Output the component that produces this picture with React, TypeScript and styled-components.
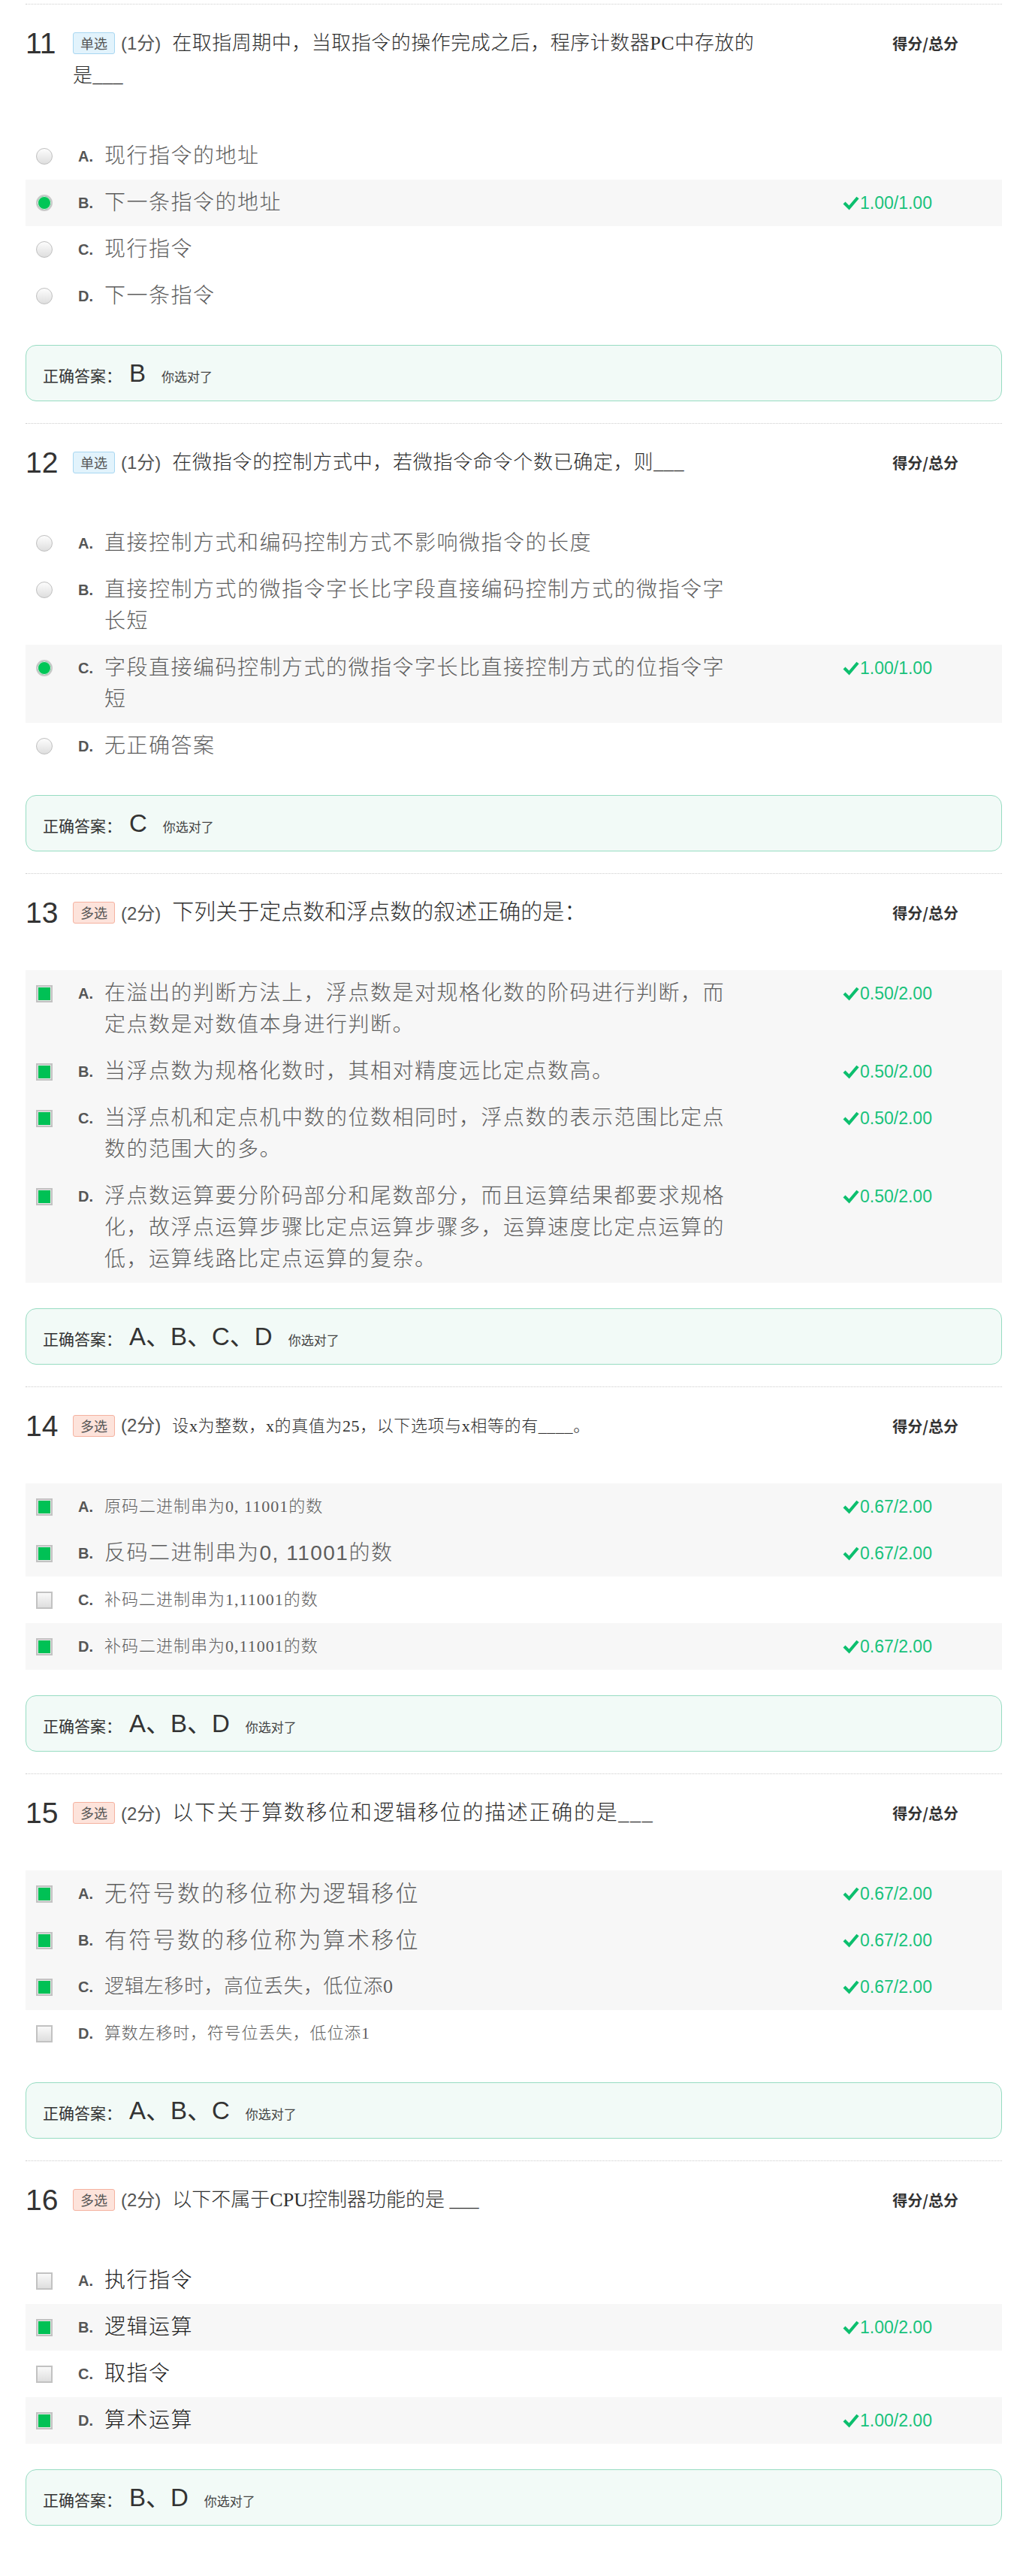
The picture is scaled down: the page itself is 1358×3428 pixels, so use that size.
import React from "react";
import styled, { createGlobalStyle, css } from "styled-components";

const GlobalStyle = createGlobalStyle`
  html, body { margin: 0; padding: 0; background: #fff; }
  body { font-family: "Liberation Sans", "Noto Sans CJK SC", sans-serif; color: #333; }
`;

const SANS = `"Liberation Sans", "Noto Sans CJK SC", sans-serif`;
const SERIF = `"Liberation Serif", "Noto Sans CJK SC", serif`;
const CJK = `"Noto Sans CJK SC", sans-serif`;

const Page = styled.main`
  width: 1300px;
  padding: 5px 0 70px 34px;
`;

const Question = styled.section`
  border-top: 1px dotted #cdcdcd;
  padding-top: 30px;
  padding-bottom: 29px;
`;

const Header = styled.header`
  display: flex;
  align-items: flex-start;
`;

const Num = styled.div`
  width: 63px;
  flex: none;
  font: 39px/43px ${SANS};
  color: #333;
`;

const Title = styled.div<{ $fs: number; $ls: number }>`
  width: 920px;
  font-family: ${SERIF};
  font-weight: 300;
  font-size: ${(p) => p.$fs}px;
  letter-spacing: ${(p) => p.$ls}px;
  line-height: 43px;
  color: #2e2e2e;
`;

const Lead = styled.span`
  letter-spacing: 0;
`;

const Badge = styled.span<{ $multi: boolean }>`
  display: inline-block;
  vertical-align: top;
  margin-top: 7px;
  width: 56px;
  height: 29px;
  box-sizing: border-box;
  border: 1px solid ${(p) => (p.$multi ? "#f5b2a0" : "#a8d7f1")};
  background: ${(p) => (p.$multi ? "#fde3db" : "#e2f3fc")};
  border-radius: 3px;
  font: 400 18px/27px ${CJK};
  color: #555;
  text-align: center;
`;

const Points = styled.span`
  font-family: ${SANS};
  font-weight: 400;
  font-size: 24px;
  line-height: 1;
  color: #555;
  margin: 0 15px 0 8px;
`;

const ScoreHead = styled.div`
  margin-left: auto;
  margin-right: 58px;
  font: 700 20px/43px ${CJK};
  color: #333;
  white-space: nowrap;
`;

const Options = styled.ul`
  list-style: none;
  margin: 55px 0 0;
  padding: 0;
`;

const Row = styled.li<{ $hl: boolean }>`
  display: flex;
  align-items: flex-start;
  padding: 10px 0 10px 14px;
  background: ${(p) => (p.$hl ? "#f7f7f7" : "transparent")};
`;

const ControlBox = styled.div`
  width: 22px;
  height: 42px;
  flex: none;
  display: flex;
  align-items: center;
  justify-content: center;
`;

const Radio = styled.span<{ $on: boolean }>`
  width: 22px;
  height: 22px;
  border-radius: 50%;
  box-sizing: border-box;
  ${(p) =>
    p.$on
      ? css`
          border: 2px solid #c9c9c9;
          background: #00c657;
          box-shadow: inset 0 0 0 1px #e9e9e9;
        `
      : css`
          border: 1px solid #bfbfbf;
          background: linear-gradient(#fdfdfd, #dedede);
        `}
`;

const Box = styled.span<{ $on: boolean }>`
  width: 23px;
  height: 23px;
  box-sizing: border-box;
  border: 2px solid #c2c2c2;
  ${(p) =>
    p.$on
      ? css`
          background: #00c155;
          box-shadow: inset 0 0 0 1px #e6e6e6;
        `
      : css`
          background: linear-gradient(#f9f9f9, #dedede);
        `}
`;

const Letter = styled.span`
  width: 35px;
  flex: none;
  margin-left: 34px;
  font: 700 20px/42px ${SANS};
  color: #555;
`;

const OptText = styled.div<{ $fs: number; $ls: number; $serif: boolean; $dark: boolean }>`
  width: 840px;
  flex: none;
  font-family: ${(p) => (p.$serif ? SERIF : SANS)};
  font-weight: 300;
  font-size: ${(p) => p.$fs}px;
  letter-spacing: ${(p) => p.$ls}px;
  line-height: 42px;
  color: ${(p) => (p.$dark ? "#222" : "#5e5e5e")};
`;

const Score = styled.div`
  margin-left: 143px;
  height: 42px;
  display: flex;
  align-items: center;
  gap: 1px;
  font: 23px ${SANS};
  color: #17c27b;
`;

const AnswerBox = styled.div`
  margin-top: 34px;
  height: 75px;
  box-sizing: border-box;
  border: 1px solid #97dcc2;
  border-radius: 14px;
  background: #f2faf7;
  display: flex;
  align-items: baseline;
  padding: 0 22px;
  line-height: 73px;
`;

const AnswerLabel = styled.span`
  font: 21px/73px ${CJK};
  color: #333;
`;

const AnswerVal = styled.span`
  margin-left: 10px;
  font: 33px/73px ${SANS};
  color: #333;
`;

const YouRight = styled.span`
  margin-left: 21px;
  font: 17px/73px ${CJK};
  color: #444;
`;

const CheckIcon = () => (
  <svg width="22" height="20" viewBox="0 0 22 20" aria-hidden="true">
    <path d="M2 10 L8.5 16.5 L20 3" fill="none" stroke="#0cbf6e" strokeWidth="4.2" strokeLinejoin="miter" />
  </svg>
);

type Opt = {
  key: string;
  text: string;
  on?: boolean;
  hl?: boolean;
  score?: string;
  fs?: number;
  ls?: number;
  serif?: boolean;
  dark?: boolean;
};

type Q = {
  num: number;
  multi: boolean;
  pts: string;
  title: string;
  tfs: number;
  tls: number;
  options: Opt[];
  answer: string;
};

const questions: Q[] = [
  {
    num: 11,
    multi: false,
    pts: "(1分)",
    title: "在取指周期中，当取指令的操作完成之后，程序计数器PC中存放的是___",
    tfs: 26,
    tls: 0.5,
    answer: "B",
    options: [
      { key: "A", text: "现行指令的地址" },
      { key: "B", text: "下一条指令的地址", on: true, hl: true, score: "1.00/1.00" },
      { key: "C", text: "现行指令" },
      { key: "D", text: "下一条指令" },
    ],
  },
  {
    num: 12,
    multi: false,
    pts: "(1分)",
    title: "在微指令的控制方式中，若微指令命令个数已确定，则___",
    tfs: 26,
    tls: 0.7,
    answer: "C",
    options: [
      { key: "A", text: "直接控制方式和编码控制方式不影响微指令的长度" },
      { key: "B", text: "直接控制方式的微指令字长比字段直接编码控制方式的微指令字长短" },
      { key: "C", text: "字段直接编码控制方式的微指令字长比直接控制方式的位指令字短", on: true, hl: true, score: "1.00/1.00" },
      { key: "D", text: "无正确答案" },
    ],
  },
  {
    num: 13,
    multi: true,
    pts: "(2分)",
    title: "下列关于定点数和浮点数的叙述正确的是：",
    tfs: 29,
    tls: 0,
    answer: "A、B、C、D",
    options: [
      { key: "A", text: "在溢出的判断方法上，浮点数是对规格化数的阶码进行判断，而定点数是对数值本身进行判断。", on: true, hl: true, score: "0.50/2.00" },
      { key: "B", text: "当浮点数为规格化数时，其相对精度远比定点数高。", on: true, hl: true, score: "0.50/2.00" },
      { key: "C", text: "当浮点机和定点机中数的位数相同时，浮点数的表示范围比定点数的范围大的多。", on: true, hl: true, score: "0.50/2.00" },
      { key: "D", text: "浮点数运算要分阶码部分和尾数部分，而且运算结果都要求规格化，故浮点运算步骤比定点运算步骤多，运算速度比定点运算的低，运算线路比定点运算的复杂。", on: true, hl: true, score: "0.50/2.00" },
    ],
  },
  {
    num: 14,
    multi: true,
    pts: "(2分)",
    title: "设x为整数，x的真值为25，以下选项与x相等的有____。",
    tfs: 22,
    tls: 0.6,
    answer: "A、B、D",
    options: [
      { key: "A", text: "原码二进制串为0, 11001的数", on: true, hl: true, score: "0.67/2.00", fs: 22, ls: 1, serif: true },
      { key: "B", text: "反码二进制串为0, 11001的数", on: true, hl: true, score: "0.67/2.00" },
      { key: "C", text: "补码二进制串为1,11001的数", fs: 22, ls: 1, serif: true },
      { key: "D", text: "补码二进制串为0,11001的数", on: true, hl: true, score: "0.67/2.00", fs: 22, ls: 1, serif: true },
    ],
  },
  {
    num: 15,
    multi: true,
    pts: "(2分)",
    title: "以下关于算数移位和逻辑移位的描述正确的是___",
    tfs: 28,
    tls: 1.7,
    answer: "A、B、C",
    options: [
      { key: "A", text: "无符号数的移位称为逻辑移位", on: true, hl: true, score: "0.67/2.00", fs: 30, ls: 2.3 },
      { key: "B", text: "有符号数的移位称为算术移位", on: true, hl: true, score: "0.67/2.00", fs: 30, ls: 2.3 },
      { key: "C", text: "逻辑左移时，高位丢失，低位添0", on: true, hl: true, score: "0.67/2.00", fs: 26, ls: 0.5, serif: true },
      { key: "D", text: "算数左移时，符号位丢失，低位添1", fs: 22, ls: 0.8, serif: true },
    ],
  },
  {
    num: 16,
    multi: true,
    pts: "(2分)",
    title: "以下不属于CPU控制器功能的是 ___",
    tfs: 26,
    tls: 0,
    answer: "B、D",
    options: [
      { key: "A", text: "执行指令", serif: true, dark: true },
      { key: "B", text: "逻辑运算", on: true, hl: true, score: "1.00/2.00", serif: true, dark: true },
      { key: "C", text: "取指令", serif: true, dark: true },
      { key: "D", text: "算术运算", on: true, hl: true, score: "1.00/2.00", serif: true, dark: true },
    ],
  },
];

const QuestionBlock = ({ q }: { q: Q }) => (
  <Question>
    <Header>
      <Num>{q.num}</Num>
      <Title $fs={q.tfs} $ls={q.tls}>
        <Lead>
          <Badge $multi={q.multi}>{q.multi ? "多选" : "单选"}</Badge>
          <Points>{q.pts}</Points>
        </Lead>
        {q.title}
      </Title>
      <ScoreHead>得分/总分</ScoreHead>
    </Header>
    <Options>
      {q.options.map((o) => (
        <Row key={o.key} $hl={!!o.hl}>
          <ControlBox>{q.multi ? <Box $on={!!o.on} /> : <Radio $on={!!o.on} />}</ControlBox>
          <Letter>{o.key}.</Letter>
          <OptText $fs={o.fs ?? 28} $ls={o.ls ?? 1.5} $serif={!!o.serif} $dark={!!o.dark}>
            {o.text}
          </OptText>
          {o.score && (
            <Score>
              <CheckIcon />
              {o.score}
            </Score>
          )}
        </Row>
      ))}
    </Options>
    <AnswerBox>
      <AnswerLabel>正确答案：</AnswerLabel>
      <AnswerVal>{q.answer}</AnswerVal>
      <YouRight>你选对了</YouRight>
    </AnswerBox>
  </Question>
);

export default function App() {
  return (
    <>
      <GlobalStyle />
      <Page>
        {questions.map((q) => (
          <QuestionBlock key={q.num} q={q} />
        ))}
      </Page>
    </>
  );
}
